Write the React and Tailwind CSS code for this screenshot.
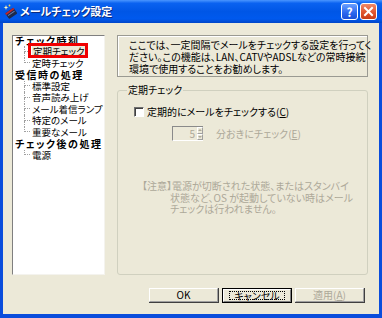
import React from "react";

const F = "font-['Noto_Sans_CJK_JP','Noto_Sans',sans-serif] [font-feature-settings:'palt']";

const tree = [
  { label: "チェック時刻", children: ["定期チェック", "定時チェック"] },
  { label: "受信時の処理", children: ["標準設定", "音声読み上げ", "メール着信ランプ", "特定のメール", "重要なメール"] },
  { label: "チェック後の処理", children: ["電源"] },
];

function TitleIcon() {
  return (
    <svg width="15" height="15" viewBox="0 0 15 15">
      <g transform="rotate(-35 8 9)">
        <rect x="3" y="6" width="10" height="7" rx="1" fill="#1d2a4a" />
        <rect x="3" y="6" width="10" height="2" fill="#c0282c" />
        <rect x="4" y="9" width="8" height="1" fill="#6b7fb0" />
      </g>
      <path d="M3 1 L3.7 3 L5.5 3.5 L3.7 4 L3 6 L2.3 4 L0.5 3.5 L2.3 3 Z" fill="#fff8c0" />
      <circle cx="6.5" cy="1.5" r="0.9" fill="#ffd24a" />
    </svg>
  );
}

function ChildRow({ text, last, selected }) {
  return (
    <div className="flex h-[11.5px] items-stretch">
      <div className="ml-[9px] flex w-[6px] flex-col">
        <div className="h-1/2 border-b border-l border-dotted border-[#a0a0a0]" />
        <div className={"h-1/2 " + (last ? "" : "border-l border-dotted border-[#a0a0a0]")} />
      </div>
      <div className="ml-[2px] text-[9.5px] leading-[11.5px]">
        {selected ? (
          <span className="relative inline-block bg-[#ece9d8] px-[1px]">
            {text}
            <span className="absolute -left-[4px] -right-[3px] -top-[3px] -bottom-[0.5px] border-[3px] border-[#f00000]" />
          </span>
        ) : (
          <span>{text}</span>
        )}
      </div>
    </div>
  );
}

function Btn({ children, variant }) {
  if (variant === "default") {
    return (
      <div className="h-[15px] w-[70px] border border-black">
        <div className="flex h-full w-full items-center justify-center border-b border-r border-b-[#808080] border-r-[#808080] border-l border-t border-l-white border-t-white bg-[#ece9d8]">
          <div className="flex h-[9px] w-[56px] items-center justify-center border border-dotted border-black text-[10px] leading-none text-black">
            {children}
          </div>
        </div>
      </div>
    );
  }
  return (
    <div className="h-[15px] w-[70px] border-b border-r border-b-[#404040] border-r-[#404040]">
      <div
        className={
          "flex h-full w-full items-center justify-center border-b border-l border-r border-t border-b-[#a0a0a0] border-l-white border-r-[#a0a0a0] border-t-white bg-[#ece9d8] text-[10px] leading-none " +
          (variant === "disabled" ? "text-[#aca899]" : "text-black")
        }
      >
        {children}
      </div>
    </div>
  );
}

export default function App() {
  return (
    <div className={"flex h-[318px] w-[382px] flex-col bg-[#0a4ddc] " + F}>
      {/* title bar */}
      <div className="flex h-[23px] items-center bg-[linear-gradient(to_bottom,#4a96ff_0%,#0a62f0_14%,#0056e6_50%,#0059ee_82%,#0045c8_100%)] pl-[3px] pr-[5px]">
        <TitleIcon />
        <div className="ml-[2px] text-[11px] font-bold leading-none text-white [text-shadow:1px_1px_0_#0a2a80]">
          メールチェック設定
        </div>
        <div className="ml-auto flex gap-[2px]">
          <div className="flex h-[17px] w-[17px] items-center justify-center rounded-[3px] border border-white bg-[linear-gradient(to_bottom,#6aa0ff,#2a66ee_60%,#1b50d8)] text-[12px] font-bold leading-none text-white">
            ?
          </div>
          <div className="flex h-[17px] w-[17px] items-center justify-center rounded-[3px] border border-white bg-[linear-gradient(to_bottom,#f08a68,#e05530_55%,#c83c18)]">
            <svg width="11" height="11" viewBox="0 0 11 11">
              <path d="M2 2 L9 9 M9 2 L2 9" stroke="white" strokeWidth="2" strokeLinecap="square" />
            </svg>
          </div>
        </div>
      </div>

      {/* client */}
      <div className="mx-[3px] mb-[4px] flex flex-1 flex-col bg-[#ece9d8] text-[10px] text-black">
        <div className="flex pl-[9px] pt-[12px]">
          {/* tree */}
          <div className="h-[240px] w-[93px] overflow-hidden border-b border-l border-r border-t border-b-[#f4f3ee] border-l-[#7f7f7f] border-r-[#f4f3ee] border-t-[#7f7f7f] bg-white pl-[2px]">
            <div className="-mt-[1.5px] whitespace-nowrap">
              {tree.map((p) => (
                <div key={p.label}>
                  <div className="h-[11.5px] text-[10px] font-bold leading-[11.5px] tracking-[1.5px]">{p.label}</div>
                  {p.children.map((c, i) => (
                    <ChildRow key={c} text={c} last={i === p.children.length - 1} selected={c === "定期チェック"} />
                  ))}
                </div>
              ))}
            </div>
          </div>

          {/* right panel */}
          <div className="ml-[12px] flex w-[251px] flex-col">
            <div className="h-[42px] border border-[#9a9a92] pl-[11px] pt-[3px] leading-[12px] whitespace-nowrap shadow-[inset_1px_1px_0_#ffffff]">
              <div>ここでは、一定間隔でメールをチェックする設定を行ってく</div>
              <div>ださい。この機能は、LAN、CATVやADSLなどの常時接続</div>
              <div>環境で使用することをお勧めします。</div>
            </div>

            <fieldset className="mt-[7px] h-[191px] rounded-[3px] border border-[#d0d0bf] p-0">
              <legend className="ml-[9px] h-[12px] px-[1px] leading-[12px]">定期チェック</legend>

              <div className="ml-[16px] mt-[10px] flex h-[12px] items-center">
                <div className="h-[10px] w-[10px] border-b border-l border-r border-t border-b-white border-l-[#6f6f6f] border-r-white border-t-[#6f6f6f] bg-white shadow-[inset_1px_1px_0_#404040]" />
                <div className="ml-[3px] leading-[12px] whitespace-nowrap">
                  定期的にメールをチェックする(<span className="underline">C</span>)
                </div>
              </div>

              <div className="ml-[54px] mt-[8px] flex h-[15px] items-center">
                <div className="flex h-[15px] w-[31px] border-b border-l border-t border-b-white border-l-[#8a8a8a] border-t-[#8a8a8a]">
                  <div className="flex flex-1 items-center justify-end pr-[2px] text-[#aca899]">5</div>
                  <div className="flex w-[6px] flex-col">
                    <div className="flex h-1/2 items-center justify-center border border-b-[#a0a0a0] border-l-white border-r-[#a0a0a0] border-t-white">
                      <div className="h-0 w-0 border-b-[2px] border-l-[2px] border-r-[2px] border-b-[#aca899] border-l-transparent border-r-transparent" />
                    </div>
                    <div className="flex h-1/2 items-center justify-center border border-b-[#a0a0a0] border-l-white border-r-[#a0a0a0] border-t-white">
                      <div className="h-0 w-0 border-l-[2px] border-r-[2px] border-t-[2px] border-l-transparent border-r-transparent border-t-[#aca899]" />
                    </div>
                  </div>
                </div>
                <div className="ml-[13px] whitespace-nowrap text-[#aca899]">
                  分おきにチェック(<span className="underline">E</span>)
                </div>
              </div>

              <div className="ml-[24px] mt-[39px] leading-[11.5px] whitespace-nowrap text-[#aca899]">
                <div>【注意】電源が切断された状態、またはスタンバイ</div>
                <div className="pl-[28px]">状態など、OS が起動していない時はメール</div>
                <div className="pl-[28px]">チェックは行われません。</div>
              </div>
            </fieldset>
          </div>
        </div>

        {/* buttons */}
        <div className="mt-[13px] flex justify-end gap-[3px] pr-[14px]">
          <Btn>OK</Btn>
          <Btn variant="default">キャンセル</Btn>
          <Btn variant="disabled">
            適用(<span className="underline">A</span>)
          </Btn>
        </div>
      </div>
    </div>
  );
}
